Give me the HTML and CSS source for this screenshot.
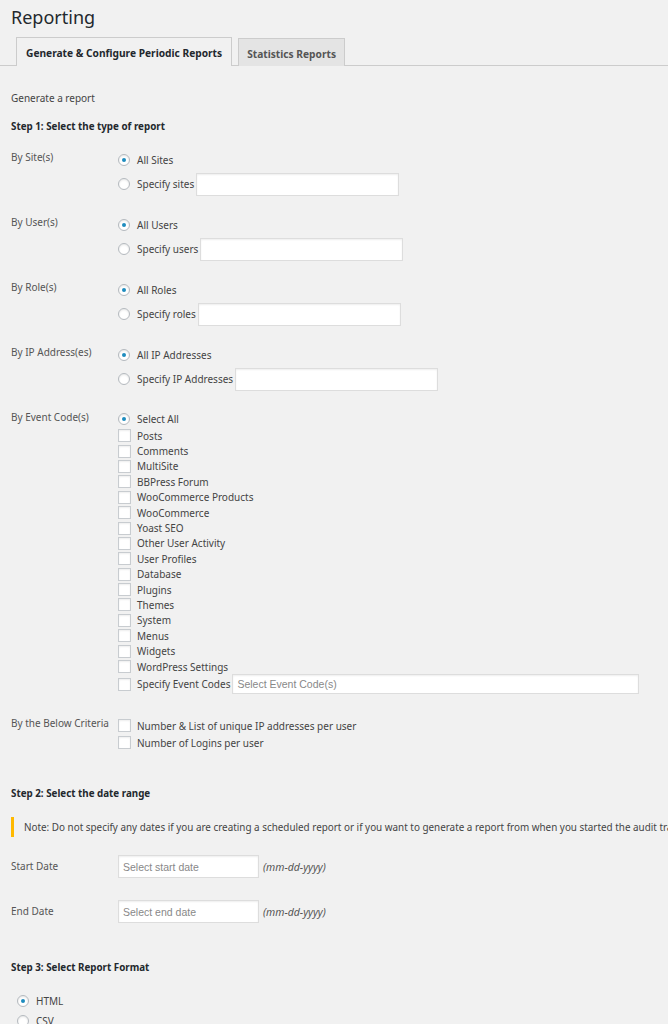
FILE: index.html
```html
<!DOCTYPE html>
<html lang="en">
<head>
    <meta charset="UTF-8">
    <meta name="viewport" content="width=device-width, initial-scale=1.0">
    <title>Reporting</title>
    <link rel="stylesheet" href="styles.css">
</head>
<body>
    <h1 class="page-title">Reporting</h1>

    <nav class="tabs">
        <a class="tab active" href="#">Generate &amp; Configure Periodic Reports</a>
        <a class="tab" href="#">Statistics Reports</a>
    </nav>

    <form class="report-form">
        <p class="intro">Generate a report</p>
        <h3 class="step step-one">Step 1: Select the type of report</h3>

        <div class="field-row">
            <div class="field-label">By Site(s)</div>
            <div class="field-options">
                <label class="option"><input type="radio" name="sites" checked> All Sites</label>
                <label class="option"><input type="radio" name="sites"> Specify sites <input type="text" class="text-input"></label>
            </div>
        </div>

        <div class="field-row">
            <div class="field-label">By User(s)</div>
            <div class="field-options">
                <label class="option"><input type="radio" name="users" checked> All Users</label>
                <label class="option"><input type="radio" name="users"> Specify users <input type="text" class="text-input"></label>
            </div>
        </div>

        <div class="field-row">
            <div class="field-label">By Role(s)</div>
            <div class="field-options">
                <label class="option"><input type="radio" name="roles" checked> All Roles</label>
                <label class="option"><input type="radio" name="roles"> Specify roles <input type="text" class="text-input"></label>
            </div>
        </div>

        <div class="field-row">
            <div class="field-label">By IP Address(es)</div>
            <div class="field-options">
                <label class="option"><input type="radio" name="ips" checked> All IP Addresses</label>
                <label class="option"><input type="radio" name="ips"> Specify IP Addresses <input type="text" class="text-input"></label>
            </div>
        </div>

        <div class="field-row">
            <div class="field-label">By Event Code(s)</div>
            <div class="field-options">
                <label class="option select-all"><input type="radio" name="codes" checked> Select All</label>
                <label class="check"><input type="checkbox"> Posts</label>
                <label class="check"><input type="checkbox"> Comments</label>
                <label class="check"><input type="checkbox"> MultiSite</label>
                <label class="check"><input type="checkbox"> BBPress Forum</label>
                <label class="check"><input type="checkbox"> WooCommerce Products</label>
                <label class="check"><input type="checkbox"> WooCommerce</label>
                <label class="check"><input type="checkbox"> Yoast SEO</label>
                <label class="check"><input type="checkbox"> Other User Activity</label>
                <label class="check"><input type="checkbox"> User Profiles</label>
                <label class="check"><input type="checkbox"> Database</label>
                <label class="check"><input type="checkbox"> Plugins</label>
                <label class="check"><input type="checkbox"> Themes</label>
                <label class="check"><input type="checkbox"> System</label>
                <label class="check"><input type="checkbox"> Menus</label>
                <label class="check"><input type="checkbox"> Widgets</label>
                <label class="check"><input type="checkbox"> WordPress Settings</label>
                <label class="check specify-codes"><input type="checkbox"> Specify Event Codes <input type="text" class="text-input wide" placeholder="Select Event Code(s)"></label>
            </div>
        </div>

        <div class="field-row criteria-row">
            <div class="field-label">By the Below Criteria</div>
            <div class="field-options">
                <label class="check criteria"><input type="checkbox"> Number &amp; List of unique IP addresses per user</label>
                <label class="check criteria"><input type="checkbox"> Number of Logins per user</label>
            </div>
        </div>

        <h3 class="step step-two">Step 2: Select the date range</h3>
        <div class="note">Note: Do not specify any dates if you are creating a scheduled report or if you want to generate a report from when you started the audit trail.</div>

        <div class="date-row">
            <div class="field-label">Start Date</div>
            <input type="text" class="text-input date" placeholder="Select start date">
            <span class="hint">(mm-dd-yyyy)</span>
        </div>
        <div class="date-row">
            <div class="field-label">End Date</div>
            <input type="text" class="text-input date" placeholder="Select end date">
            <span class="hint">(mm-dd-yyyy)</span>
        </div>

        <h3 class="step step-three">Step 3: Select Report Format</h3>
        <div class="formats">
            <label class="option format"><input type="radio" name="format" checked> HTML</label>
            <label class="option format"><input type="radio" name="format"> CSV</label>
        </div>
    </form>
</body>
</html>
```

FILE: styles.css
```css
body {
    margin: 0;
    padding: 0 0 0 11px;
    background-color: #f1f1f1;
    font-family: "Noto Sans", "Open Sans", sans-serif;
    font-size: 10px;
    color: #444;
    overflow: hidden;
}
.page-title {
    margin: 0;
    padding-top: 6px;
    font-size: 18px;
    font-weight: 400;
    line-height: 22px;
    color: #23282d;
}
.tabs {
    display: flex;
    margin: 9px 0 0 -11px;
    padding-left: 16px;
    border-bottom: 1px solid #ccc;
    height: 28px;
}
.tab {
    display: block;
    height: 28px;
    padding: 1px 8px 0;
    line-height: 28px;
    font-size: 10.2px;
    font-weight: 700;
    color: #555;
    text-decoration: none;
    background: #e4e4e4;
    border: 1px solid #ccc;
    border-bottom: none;
    box-sizing: border-box;
    margin-top: 1px;
}
.tab.active {
    background: #f1f1f1;
    color: #23282d;
    height: 29px;
    margin-top: 0;
    padding: 1px 9px 0;
}
.tab + .tab {
    margin-left: 6px;
}
.intro {
    margin: 25px 0 0;
    line-height: 14px;
}
.step {
    margin: 0;
    font-size: 9.8px;
    font-weight: 700;
    line-height: 14px;
    color: #23282d;
}
.step-one {
    margin-top: 15px;
}
.step-two {
    margin-top: 36px;
}
.step-three {
    margin-top: 38px;
}
.field-row {
    display: flex;
    margin-top: 19px;
}
.step-one + .field-row {
    margin-top: 15px;
}
.field-label {
    width: 107px;
    flex-shrink: 0;
    padding-top: 1px;
    line-height: 14px;
    color: #555;
}
.field-options {
    display: flex;
    flex-direction: column;
    gap: 2px;
}
.option {
    display: flex;
    align-items: center;
    height: 22px;
}
.option input[type="radio"] {
    appearance: none;
    width: 12px;
    height: 12px;
    margin: 0 7px 0 0;
    border: 1px solid #b4b9be;
    border-radius: 50%;
    background: #fff;
    box-shadow: inset 0 1px 2px rgba(0, 0, 0, 0.1);
    box-sizing: border-box;
    display: grid;
    place-items: center;
    flex-shrink: 0;
}
.option input[type="radio"]:checked::before {
    content: "";
    width: 4px;
    height: 4px;
    border-radius: 50%;
    background: #1e8cbe;
}
.text-input {
    width: 203px;
    height: 23px;
    margin: 0 0 0 2px;
    padding: 0 4px;
    border: 1px solid #ddd;
    background: #fff;
    box-shadow: inset 0 1px 2px rgba(0, 0, 0, 0.07);
    box-sizing: border-box;
    font-family: "Liberation Sans", Arial, sans-serif;
    font-size: 10.5px;
    color: #333;
}
.text-input::placeholder {
    color: #888;
}
.text-input.wide {
    width: 407px;
    height: 20px;
}
.field-options:has(.check) {
    gap: 0;
}
.select-all {
    height: 19px;
}
.check {
    display: flex;
    align-items: center;
    height: 15.4px;
}
.check input[type="checkbox"] {
    appearance: none;
    width: 13px;
    height: 13px;
    margin: 0 6px 0 0;
    border: 1px solid #c8ccd0;
    background: #fff;
    box-shadow: inset 0 1px 2px rgba(0, 0, 0, 0.07);
    box-sizing: border-box;
    flex-shrink: 0;
}
.specify-codes {
    height: 20px;
}
.criteria-row {
    margin-top: 21px;
}
.criteria-row .field-options {
    padding-top: 2px;
}
.check.criteria {
    height: 17px;
}
.note {
    margin: 16px 0 0;
    height: 20px;
    line-height: 20px;
    padding-left: 10px;
    border-left: 3px solid #ffb900;
    white-space: nowrap;
    font-size: 9.9px;
}
.date-row {
    display: flex;
    align-items: center;
    margin-top: 18px;
}
.date-row + .date-row {
    margin-top: 22px;
}
.date-row .field-label {
    padding-top: 0;
    line-height: 23px;
}
.text-input.date {
    width: 141px;
    margin: 0;
}
.hint {
    margin-left: 4px;
    font-style: italic;
    font-size: 10.5px;
    color: #555;
}
.formats {
    margin-top: 16px;
    padding-left: 6px;
}
.option.format {
    height: 20px;
}
```
